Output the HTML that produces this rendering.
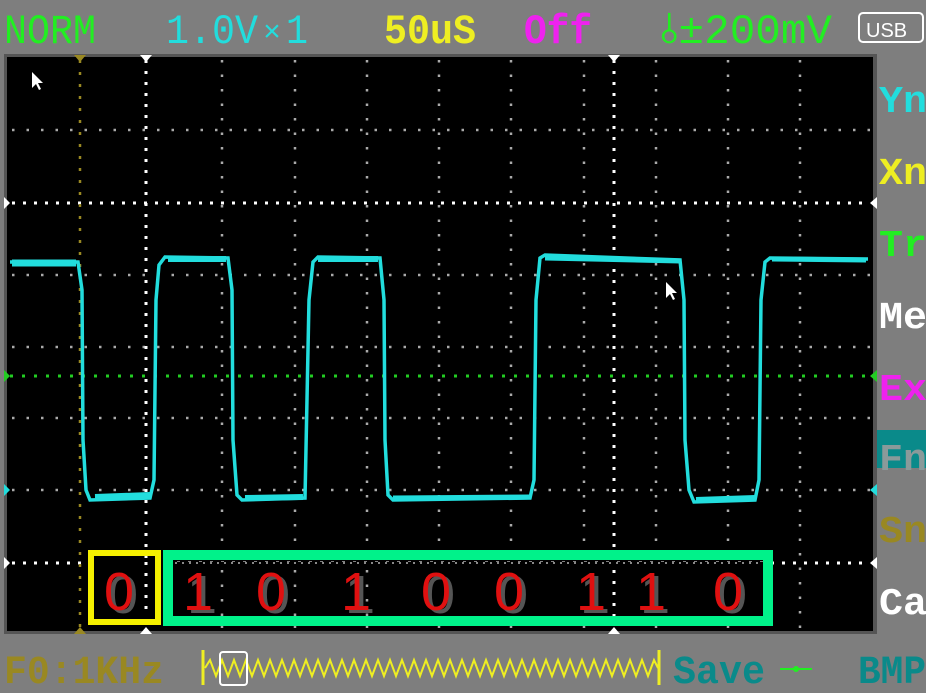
<!DOCTYPE html>
<html><head><meta charset="utf-8"><style>
html,body{margin:0;padding:0;background:#7e7e7e;width:926px;height:693px;overflow:hidden}
svg{display:block}
</style></head><body>
<svg width="926" height="693" viewBox="0 0 926 693" xmlns="http://www.w3.org/2000/svg">
<rect width="926" height="693" fill="#7e7e7e"/>
<g font-family="Liberation Mono, monospace" font-size="42">
<text x="4" y="43" fill="#22ee22" textLength="92" lengthAdjust="spacingAndGlyphs">NORM</text>
<text x="166" y="43" fill="#22dddd" textLength="92" lengthAdjust="spacingAndGlyphs">1.0V</text>
<text x="263" y="41" fill="#22dddd" font-size="30">×</text>
<text x="286" y="43" fill="#22dddd" textLength="22" lengthAdjust="spacingAndGlyphs">1</text>
<text x="384" y="43" fill="#eeee22" textLength="92" lengthAdjust="spacingAndGlyphs" font-weight="bold">50uS</text>
<text x="524" y="43" fill="#ee22ee" textLength="68" lengthAdjust="spacingAndGlyphs" font-weight="bold">Off</text>
<text x="660" y="43" fill="#22ee22" textLength="172" lengthAdjust="spacingAndGlyphs">⫰±200mV</text>
</g>
<rect x="859" y="13" width="64" height="29" rx="4" fill="none" stroke="#fff" stroke-width="2"/>
<text x="866" y="37" font-family="Liberation Sans, sans-serif" font-size="20" fill="#fff">USB</text>
<rect x="4" y="54" width="873" height="580" fill="#555"/>
<rect x="7" y="57" width="866" height="574" fill="#000"/>
<g stroke="#aaa" stroke-width="2.5" stroke-dasharray="2.5 12" fill="none">
<line x1="12" y1="130" x2="870" y2="130"/>
<line x1="12" y1="275" x2="870" y2="275"/>
<line x1="12" y1="347" x2="870" y2="347"/>
<line x1="12" y1="418" x2="870" y2="418"/>
<line x1="12" y1="490" x2="870" y2="490"/>
</g>
<g stroke="#fff" stroke-width="3" stroke-dasharray="3 8" fill="none">
<line x1="12" y1="203" x2="870" y2="203"/>
<line x1="12" y1="563" x2="870" y2="563"/>
</g>
<line x1="10" y1="376" x2="870" y2="376" stroke="#22cc22" stroke-width="3" stroke-dasharray="3 9"/>
<g stroke="#aaa" stroke-width="2.5" stroke-dasharray="2.5 12" fill="none">
<line x1="222" y1="60" x2="222" y2="630"/>
<line x1="295" y1="60" x2="295" y2="630"/>
<line x1="367" y1="60" x2="367" y2="630"/>
<line x1="439" y1="60" x2="439" y2="630"/>
<line x1="511" y1="60" x2="511" y2="630"/>
<line x1="584" y1="60" x2="584" y2="630"/>
<line x1="656" y1="60" x2="656" y2="630"/>
<line x1="728" y1="60" x2="728" y2="630"/>
<line x1="800" y1="60" x2="800" y2="630"/>
</g>
<g stroke="#fff" stroke-width="3" stroke-dasharray="3 8" fill="none">
<line x1="146" y1="60" x2="146" y2="630"/>
<line x1="614" y1="60" x2="614" y2="630"/>
</g>
<line x1="80" y1="60" x2="80" y2="630" stroke="#998822" stroke-width="2.5" stroke-dasharray="3 9"/>
<polygon points="140,55 152,55 146,62" fill="#fff"/>
<polygon points="608,55 620,55 614,62" fill="#fff"/>
<polygon points="74,55 86,55 80,62" fill="#998822"/>
<polygon points="140,634 152,634 146,627" fill="#fff"/>
<polygon points="608,634 620,634 614,627" fill="#fff"/>
<polygon points="74,634 86,634 80,627" fill="#998822"/>
<polygon points="4,197 4,209 10,203" fill="#fff"/>
<polygon points="4,557 4,569 10,563" fill="#fff"/>
<polygon points="4,370 4,382 10,376" fill="#22cc22"/>
<polygon points="4,484 4,496 10,490" fill="#22dddd"/>
<polygon points="877,197 877,209 870,203" fill="#fff"/>
<polygon points="877,557 877,569 870,563" fill="#fff"/>
<polygon points="877,370 877,382 870,376" fill="#22cc22"/>
<polygon points="877,484 877,496 870,490" fill="#22dddd"/>
<polygon points="32,72 32,88 36,84 39,90 41,89 38,83 43,83" fill="#fff"/>
<polygon points="666,282 666,298 670,294 673,300 675,299 672,293 677,293" fill="#fff"/>
<polyline fill="none" stroke="#22dddd" stroke-width="3.5" points="10,262 78,262 82,290 83,440 86,490 90,500 150,498 154,480 156,300 159,265 165,257 228,258 232,290 233,440 237,495 242,500 305,498 309,300 313,262 318,257 380,258 384,300 385,440 388,495 393,500 530,498 534,480 536,300 540,258 545,255 680,260 684,300 685,440 689,490 694,502 755,500 759,480 761,300 765,262 770,258 868,259"/>
<polyline fill="none" stroke="#22dddd" stroke-width="7" points="12,263 76,263"/>
<polyline fill="none" stroke="#22dddd" stroke-width="6" points="95,497 150,495"/>
<polyline fill="none" stroke="#22dddd" stroke-width="6" points="168,259 226,259"/>
<polyline fill="none" stroke="#22dddd" stroke-width="6" points="245,498 303,497"/>
<polyline fill="none" stroke="#22dddd" stroke-width="6" points="318,259 378,259"/>
<polyline fill="none" stroke="#22dddd" stroke-width="5" points="393,498 530,497"/>
<polyline fill="none" stroke="#22dddd" stroke-width="5" points="545,258 680,261"/>
<polyline fill="none" stroke="#22dddd" stroke-width="6" points="696,500 755,498"/>
<polyline fill="none" stroke="#22dddd" stroke-width="5" points="772,259 866,260"/>
<rect x="99" y="559" width="52" height="58" fill="#000"/>
<rect x="175" y="562" width="588" height="54" fill="#000"/>
<line x1="175" y1="563" x2="763" y2="563" stroke="#888" stroke-width="2" stroke-dasharray="2 5"/>
<line x1="146" y1="562" x2="146" y2="616" stroke="#fff" stroke-width="3" stroke-dasharray="3 8"/>
<line x1="222" y1="570" x2="222" y2="616" stroke="#aaa" stroke-width="2.5" stroke-dasharray="2.5 12"/>
<line x1="295" y1="570" x2="295" y2="616" stroke="#aaa" stroke-width="2.5" stroke-dasharray="2.5 12"/>
<line x1="367" y1="570" x2="367" y2="616" stroke="#aaa" stroke-width="2.5" stroke-dasharray="2.5 12"/>
<line x1="614" y1="570" x2="614" y2="616" stroke="#fff" stroke-width="3" stroke-dasharray="3 8"/>
<rect x="91" y="553" width="67" height="69" fill="none" stroke="#f5f000" stroke-width="6"/>
<rect x="168" y="555" width="600" height="66" fill="none" stroke="#00f28a" stroke-width="10"/>
<g font-family="Liberation Sans, sans-serif" font-size="54" text-anchor="middle">
<g fill="#555" transform="translate(4,3)">
<text x="119" y="610">0</text><text x="198" y="610">1</text><text x="271" y="610">0</text><text x="356" y="610">1</text><text x="436" y="610">0</text><text x="509" y="610">0</text><text x="591" y="610">1</text><text x="651" y="610">1</text><text x="728" y="610">0</text>
</g>
<g fill="#e01010">
<text x="119" y="610">0</text><text x="198" y="610">1</text><text x="271" y="610">0</text><text x="356" y="610">1</text><text x="436" y="610">0</text><text x="509" y="610">0</text><text x="591" y="610">1</text><text x="651" y="610">1</text><text x="728" y="610">0</text>
</g>
</g>
<rect x="877" y="430" width="49" height="38" fill="#0a8a8a"/>
<g font-family="Liberation Mono, monospace" font-size="38" font-weight="bold">
<text x="879" y="112" fill="#22dddd" textLength="48" lengthAdjust="spacingAndGlyphs">Yn</text>
<text x="879" y="184" fill="#eeee22" textLength="48" lengthAdjust="spacingAndGlyphs">Xn</text>
<text x="879" y="256" fill="#22ee22" textLength="48" lengthAdjust="spacingAndGlyphs">Tr</text>
<text x="879" y="328" fill="#ffffff" textLength="48" lengthAdjust="spacingAndGlyphs">Me</text>
<text x="879" y="400" fill="#ee22ee" textLength="48" lengthAdjust="spacingAndGlyphs">Ex</text>
<text x="879" y="470" fill="#8a9a9a" textLength="48" lengthAdjust="spacingAndGlyphs">Fn</text>
<text x="879" y="542" fill="#998822" textLength="48" lengthAdjust="spacingAndGlyphs">Sn</text>
<text x="879" y="614" fill="#ffffff" textLength="48" lengthAdjust="spacingAndGlyphs">Ca</text>
</g>
<g font-family="Liberation Mono, monospace" font-size="40" font-weight="bold">
<text x="4" y="683" fill="#998822" textLength="160" lengthAdjust="spacingAndGlyphs">F0:1KHz</text>
<text x="673" y="683" fill="#0a8a8a" textLength="92" lengthAdjust="spacingAndGlyphs">Save</text>
<text x="858" y="683" fill="#0a8a8a" textLength="68" lengthAdjust="spacingAndGlyphs">BMP</text>
</g>
<line x1="203" y1="650" x2="203" y2="685" stroke="#eeee22" stroke-width="3"/>
<line x1="659" y1="650" x2="659" y2="685" stroke="#eeee22" stroke-width="3"/>
<polyline fill="none" stroke="#eeee22" stroke-width="2" points="205,668 210,660 216,676 222,660 228,676 234,660 240,676 246,660 252,676 258,660 264,676 270,660 276,676 282,660 288,676 294,660 300,676 306,660 312,676 318,660 324,676 330,660 336,676 342,660 348,676 354,660 360,676 366,660 372,676 378,660 384,676 390,660 396,676 402,660 408,676 414,660 420,676 426,660 432,676 438,660 444,676 450,660 456,676 462,660 468,676 474,660 480,676 486,660 492,676 498,660 504,676 510,660 516,676 522,660 528,676 534,660 540,676 546,660 552,676 558,660 564,676 570,660 576,676 582,660 588,676 594,660 600,676 606,660 612,676 618,660 624,676 630,660 636,676 642,660 648,676 654,660 658,668"/>
<rect x="220" y="652" width="27" height="33" rx="3" fill="none" stroke="#fff" stroke-width="2"/>
<line x1="780" y1="669" x2="812" y2="669" stroke="#22ee22" stroke-width="2"/>
<circle cx="796" cy="669" r="3" fill="#22ee22"/>
</svg>
</body></html>
